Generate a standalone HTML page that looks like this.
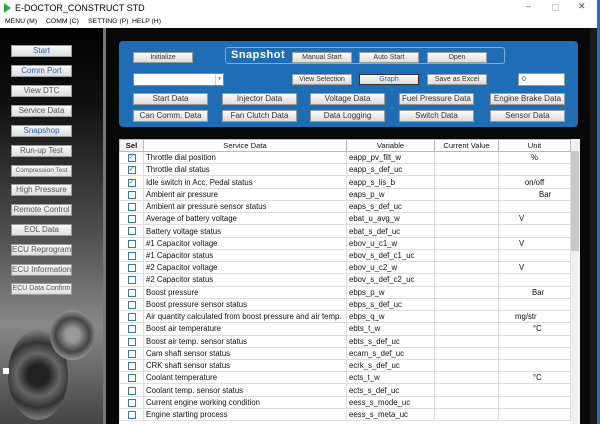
<!DOCTYPE html>
<html><head><style>
*{margin:0;padding:0;box-sizing:border-box}
body{width:600px;height:424px;overflow:hidden;font-family:"Liberation Sans",sans-serif;background:#000;position:relative}
.a{position:absolute}
.tb{left:0;top:0;width:600px;height:17px;background:#fff;font-size:9px;color:#000}
.mn{left:0;top:17px;width:600px;height:11px;background:#fff;font-size:6.8px}
.mn span{position:absolute;top:1px}
.lb{left:0;top:28px;width:103px;height:396px;background:linear-gradient(180deg,#000 0%,#111 20%,#555 55%,#888 75%,#444 100%)}
.btn{position:absolute;background:linear-gradient(#fbfbfb,#dcdcdc);border:1px solid #9a9a9a;font-size:8px;text-align:center;color:#333;line-height:10px;white-space:nowrap;overflow:hidden}
.lbtn{left:11px;width:61px;height:12px;color:#555}
.blue{left:119px;top:41px;width:459px;height:86px;background:#1f6db4;border-radius:4px}
.grp{left:225px;top:47px;width:280px;height:17px;border:1px solid #7aaee0;border-radius:3px}
table{border-collapse:collapse;font-size:7.8px;color:#111}
td{border:1px solid #ddd;height:12.24px;padding:0 2px;white-space:nowrap;overflow:hidden}
th{font-weight:normal;font-size:7.6px;border:1px solid #bbb;height:12px;background:#fff}
.cb{display:inline-block;width:8px;height:8px;border:1px solid #3a7a9a;vertical-align:middle;font-size:7px;line-height:6px;color:#1a8a2a;text-align:center}
</style></head><body>
<div class="a tb"><span style="position:absolute;left:4px;top:3px;width:0;height:0;border-left:7px solid #2aa84a;border-top:5px solid transparent;border-bottom:5px solid transparent"></span><span style="position:absolute;left:15px;top:3px">E-DOCTOR_CONSTRUCT STD</span><span style="position:absolute;left:526px;top:1px;color:#555">–</span><span style="position:absolute;left:552px;top:4px;width:7px;height:7px;border:1px solid #ccc"></span><span style="position:absolute;left:578px;top:1px;color:#444">✕</span></div>
<div class="a mn"><span style="left:5px">MENU (M)</span><span style="left:46px">COMM (C)</span><span style="left:88px">SETTING (P)</span><span style="left:132px">HELP (H)</span></div>
<div class="a" style="left:0;top:28px;width:600px;height:1px;background:#888"></div>
<div class="a lb"></div>
<div class="a" style="left:8px;top:330px;width:60px;height:90px;border-radius:50%;background:radial-gradient(circle,#222 20%,#666 40%,#333 60%,#777 80%)"></div>
<div class="a" style="left:50px;top:310px;width:45px;height:50px;border-radius:50%;background:radial-gradient(circle,#999 20%,#444 50%,#aaa 80%)"></div>
<div class="a" style="left:3px;top:368px;width:6px;height:6px;background:#fff"></div>
<div class="a" style="left:103px;top:28px;width:3px;height:396px;background:#777"></div>
<div class="a" style="left:106px;top:28px;width:487px;height:396px;background:#080808"></div>
<div class="a" style="left:590px;top:28px;width:10px;height:396px;background:#1a1a1a"></div>
<div class="a" style="left:597px;top:0;width:3px;height:424px;background:#2a6ac0"></div>
<div class="btn lbtn" style="top:45px;color:#2a62a8">Start</div>
<div class="btn lbtn" style="top:65px;color:#2a62a8">Comm Port</div>
<div class="btn lbtn" style="top:85px">View DTC</div>
<div class="btn lbtn" style="top:105px">Service Data</div>
<div class="btn lbtn" style="top:125px;color:#2a62a8">Snapshop</div>
<div class="btn lbtn" style="top:145px">Run-up Test</div>
<div class="btn lbtn" style="top:165px;font-size:6.5px">Compression Test</div>
<div class="btn lbtn" style="top:184px">High Pressure</div>
<div class="btn lbtn" style="top:204px">Remote Control</div>
<div class="btn lbtn" style="top:224px">EOL Data</div>
<div class="btn lbtn" style="top:244px">ECU Reprogram</div>
<div class="btn lbtn" style="top:264px">ECU Information</div>
<div class="btn lbtn" style="top:283px;font-size:7px">ECU Data Confirm</div>
<div class="a blue"></div>
<div class="a grp"></div>
<div class="a" style="left:231px;top:49px;color:#fff;font-weight:bold;font-size:11px;letter-spacing:0.5px">Snapshot</div>
<div class="btn" style="left:133px;top:52px;width:60px;height:11px;font-size:7px">Initialize</div>
<div class="btn" style="left:292px;top:52px;width:60px;height:11px;font-size:7px">Manual Start</div>
<div class="btn" style="left:359px;top:52px;width:60px;height:11px;font-size:7px">Auto Start</div>
<div class="btn" style="left:427px;top:52px;width:60px;height:11px;font-size:7px">Open</div>
<div class="a" style="left:133px;top:73px;width:91px;height:13px;background:#fff;border:1px solid #888"><span style="position:absolute;right:0;top:0;width:8px;height:11px;border-left:1px solid #ccc;font-size:5px;color:#888;text-align:center;line-height:11px">▼</span></div>
<div class="btn" style="left:292px;top:74px;width:60px;height:11px;font-size:7px">View Selection</div>
<div class="btn" style="left:359px;top:74px;width:60px;height:11px;font-size:7px;color:#2a62a8;border-color:#333">Graph</div>
<div class="btn" style="left:427px;top:74px;width:60px;height:11px;font-size:7px">Save as Excel</div>
<div class="a" style="left:518px;top:73px;width:47px;height:13px;background:#fff;border:1px solid #999;font-size:7px;padding-left:3px;line-height:11px;color:#555">0</div>
<div class="btn" style="left:133px;top:93px;width:75px;height:12px">Start Data</div>
<div class="btn" style="left:222px;top:93px;width:75px;height:12px">Injector Data</div>
<div class="btn" style="left:310px;top:93px;width:75px;height:12px">Voltage Data</div>
<div class="btn" style="left:399px;top:93px;width:75px;height:12px">Fuel Pressure Data</div>
<div class="btn" style="left:490px;top:93px;width:75px;height:12px">Engine Brake Data</div>
<div class="btn" style="left:133px;top:110px;width:75px;height:12px">Can Comm. Data</div>
<div class="btn" style="left:222px;top:110px;width:75px;height:12px">Fan Clutch Data</div>
<div class="btn" style="left:310px;top:110px;width:75px;height:12px">Data Logging</div>
<div class="btn" style="left:399px;top:110px;width:75px;height:12px">Switch Data</div>
<div class="btn" style="left:490px;top:110px;width:75px;height:12px">Sensor Data</div>
<div class="a" style="left:119px;top:139px;width:461px;height:285px;background:#fff"></div>
<div class="a" style="left:570px;top:139px;width:10px;height:285px;background:#f0f0f0"><div style="position:absolute;left:1px;top:12px;width:8px;height:100px;background:#c8c8c8"></div></div>
<table class="a" style="left:119px;top:139px;width:451px;table-layout:fixed">
<colgroup><col style="width:24px"><col style="width:203px"><col style="width:88px"><col style="width:64px"><col style="width:72px"></colgroup>
<tr><th style="font-weight:bold;background:#f3f3f3">Sel</th><th>Service Data</th><th>Variable</th><th>Current Value</th><th>Unit</th></tr>
<tr><td align=center><span class="cb">✓</span></td><td>Throttle dial position</td><td>eapp_pv_filt_w</td><td></td><td align=center>%</td></tr>
<tr><td align=center><span class="cb">✓</span></td><td>Throttle dial status</td><td>eapp_s_def_uc</td><td></td><td></td></tr>
<tr><td align=center><span class="cb">✓</span></td><td>Idle switch in Acc. Pedal status</td><td>eapp_s_lis_b</td><td></td><td align=center>on/off</td></tr>
<tr><td align=center><span class="cb"></span></td><td>Ambient air pressure</td><td>eaps_p_w</td><td></td><td style="padding-left:40px">Bar</td></tr>
<tr><td align=center><span class="cb"></span></td><td>Ambient air pressure sensor status</td><td>eaps_s_def_uc</td><td></td><td></td></tr>
<tr><td align=center><span class="cb"></span></td><td>Average of battery voltage</td><td>ebat_u_avg_w</td><td></td><td style="padding-left:20px">V</td></tr>
<tr><td align=center><span class="cb"></span></td><td>Battery voltage status</td><td>ebat_s_def_uc</td><td></td><td></td></tr>
<tr><td align=center><span class="cb"></span></td><td>#1 Capacitor voltage</td><td>ebov_u_c1_w</td><td></td><td style="padding-left:20px">V</td></tr>
<tr><td align=center><span class="cb"></span></td><td>#1 Capacitor status</td><td>ebov_s_def_c1_uc</td><td></td><td></td></tr>
<tr><td align=center><span class="cb"></span></td><td>#2 Capacitor voltage</td><td>ebov_u_c2_w</td><td></td><td style="padding-left:20px">V</td></tr>
<tr><td align=center><span class="cb"></span></td><td>#2 Capacitor status</td><td>ebov_s_def_c2_uc</td><td></td><td></td></tr>
<tr><td align=center><span class="cb"></span></td><td>Boost pressure</td><td>ebps_p_w</td><td></td><td style="padding-left:33px">Bar</td></tr>
<tr><td align=center><span class="cb"></span></td><td>Boost pressure sensor status</td><td>ebps_s_def_uc</td><td></td><td></td></tr>
<tr><td align=center><span class="cb"></span></td><td>Air quantity calculated from boost pressure and air temp.</td><td>ebps_q_w</td><td></td><td style="padding-left:16px">mg/str</td></tr>
<tr><td align=center><span class="cb"></span></td><td>Boost air temperature</td><td>ebts_t_w</td><td></td><td style="padding-left:34px">°C</td></tr>
<tr><td align=center><span class="cb"></span></td><td>Boost air temp. sensor status</td><td>ebts_s_def_uc</td><td></td><td></td></tr>
<tr><td align=center><span class="cb"></span></td><td>Cam shaft sensor status</td><td>ecam_s_def_uc</td><td></td><td></td></tr>
<tr><td align=center><span class="cb"></span></td><td>CRK shaft sensor status</td><td>ecrk_s_def_uc</td><td></td><td></td></tr>
<tr><td align=center><span class="cb"></span></td><td>Coolant temperature</td><td>ects_t_w</td><td></td><td style="padding-left:34px">°C</td></tr>
<tr><td align=center><span class="cb"></span></td><td>Coolant temp. sensor status</td><td>ects_s_def_uc</td><td></td><td></td></tr>
<tr><td align=center><span class="cb"></span></td><td>Current engine working condition</td><td>eess_s_mode_uc</td><td></td><td></td></tr>
<tr><td align=center><span class="cb"></span></td><td>Engine starting process</td><td>eess_s_meta_uc</td><td></td><td></td></tr>
</table>
</body></html>
